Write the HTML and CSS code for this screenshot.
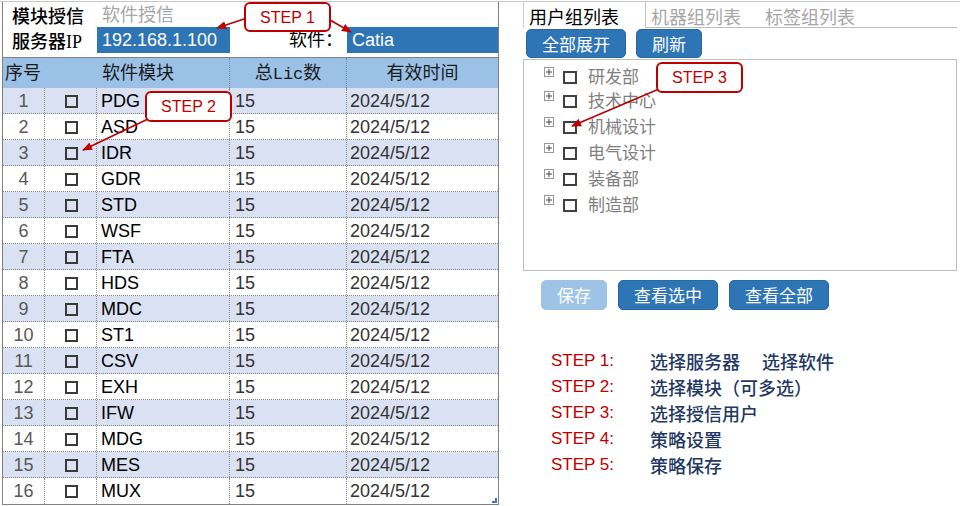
FILE: index.html
```html
<html>
  <head>
    <link rel="stylesheet" href="styles.css">
  </head>
  <body class="body">
    <div class="TopLine"></div>
    <div class="Page">

      <div class="Sheet">
        <div class="Info">
          <div class="Info-label">模块授信</div>
          <div class="Info-hint">软件授信</div>
          <div></div>
          <div></div>
          <div class="Info-label">服务器<span class="serif">IP</span></div>
          <div class="Info-value">192.168.1.100</div>
          <div class="Info-key">软件：</div>
          <div class="Info-value">Catia</div>
        </div>

        <div class="Head">
          <div class="Head-cell">序号</div>
          <div class="Head-cell Head-cell--left">软件模块</div>
          <div class="Head-cell Head-cell--mid">总<span class="mono">Lic</span>数</div>
          <div class="Head-cell Head-cell--mid">有效时间</div>
        </div>

        <div class="Rows" id="rows"></div>
        <div class="Sheet-handle"></div>
      </div>

      <div class="Side">
        <div class="Tabs">
          <div class="Tab Tab--active">用户组列表</div>
          <div class="Tab Tab--second">机器组列表</div>
          <div class="Tab">标签组列表</div>
        </div>
        <div class="Tools">
          <button class="Btn Btn--wide">全部展开</button>
          <button class="Btn">刷新</button>
        </div>
        <div class="Tree" id="tree"></div>
        <div class="Actions">
          <button class="Btn Btn--off">保存</button>
          <button class="Btn Btn--wide">查看选中</button>
          <button class="Btn Btn--wide">查看全部</button>
        </div>
        <div class="Steps">
          <div class="Step"><span class="Step-no">STEP 1:</span><span class="Step-text">选择服务器<span class="Step-gap">选择软件</span></span></div>
          <div class="Step"><span class="Step-no">STEP 2:</span><span class="Step-text">选择模块（可多选）</span></div>
          <div class="Step"><span class="Step-no">STEP 3:</span><span class="Step-text">选择授信用户</span></div>
          <div class="Step"><span class="Step-no">STEP 4:</span><span class="Step-text">策略设置</span></div>
          <div class="Step"><span class="Step-no">STEP 5:</span><span class="Step-text">策略保存</span></div>
        </div>
      </div>
    </div>

    <svg class="Notes" width="960" height="506" viewBox="0 0 960 506">
      <defs>
        <marker id="head" viewBox="0 0 10 8" refX="9" refY="4" markerWidth="10" markerHeight="8" markerUnits="userSpaceOnUse" orient="auto">
          <path d="M0 0 L10 4 L0 8 z" fill="#c00000"/>
        </marker>
      </defs>
      <g class="Notes-line">
        <line x1="247" y1="18" x2="217" y2="28" marker-end="url(#head)"/>
        <line x1="330" y1="20" x2="351" y2="32" marker-end="url(#head)"/>
        <line x1="148" y1="119" x2="83" y2="150" marker-end="url(#head)"/>
        <line x1="659" y1="89" x2="572" y2="126" marker-end="url(#head)"/>
      </g>
      <g class="Notes-box">
        <rect x="245" y="3" width="85" height="28" rx="5"/>
        <rect x="146" y="92" width="85" height="29" rx="5"/>
        <rect x="657" y="63" width="85" height="29" rx="5"/>
      </g>
      <g class="Notes-text">
        <text x="287.5" y="23">STEP 1</text>
        <text x="188.5" y="112">STEP 2</text>
        <text x="699.5" y="83">STEP 3</text>
      </g>
    </svg>

    <script>
      const modules = ['PDG', 'ASD', 'IDR', 'GDR', 'STD', 'WSF', 'FTA', 'HDS',
                       'MDC', 'ST1', 'CSV', 'EXH', 'IFW', 'MDG', 'MES', 'MUX'];
      const rows = document.getElementById('rows');
      modules.forEach((name, i) => {
        const row = document.createElement('div');
        row.className = 'Row' + (i % 2 === 0 ? ' Row--band' : '');
        row.innerHTML =
          '<div class="Cell Cell--num">' + (i + 1) + '</div>' +
          '<div class="Cell Cell--chk"><span class="Check"></span></div>' +
          '<div class="Cell Cell--name">' + name + '</div>' +
          '<div class="Cell Cell--lic">15</div>' +
          '<div class="Cell Cell--date">2024/5/12</div>';
        rows.appendChild(row);
      });

      const groups = ['研发部', '技术中心', '机械设计', '电气设计', '装备部', '制造部'];
      const tree = document.getElementById('tree');
      groups.forEach((name) => {
        const item = document.createElement('div');
        item.className = 'Tree-item';
        item.innerHTML =
          '<svg class="Tree-plus" width="10" height="10" viewBox="0 0 10 10">' +
          '<rect x="0.5" y="0.5" width="9" height="9" fill="none" stroke="#999"/>' +
          '<path d="M2 5 H8 M5 2 V8" stroke="#444"/></svg>' +
          '<span class="Tree-check"></span>' +
          '<span class="Tree-text">' + name + '</span>';
        tree.appendChild(item);
      });
    </script>
  </body>
</html>
```

FILE: styles.css
```css
html, body {
  padding: 0;
  margin: 0;
  background: #fff;
  font-family: "Liberation Sans", "Noto Sans CJK SC", sans-serif;
}
body {
  position: relative;
  width: 960px;
  height: 506px;
  overflow: hidden;
}
button {
  cursor: pointer;
}
.serif {
  font-family: "Liberation Serif", serif;
}
.mono {
  font-family: "Liberation Mono", monospace;
  font-size: 17px;
}

.TopLine {
  height: 1px;
  border-bottom: 1px solid #c8c8c8;
}
.Page {
  display: flex;
  align-items: flex-start;
}

/* left sheet */
.Sheet {
  position: relative;
  margin-left: 2px;
  width: 495px;
  border: 1px solid #808080;
  border-top: none;
}
.Info {
  display: grid;
  grid-template-columns: 94px 133px 117px 151px;
  grid-template-rows: 25px 26px;
  height: 55px;
  border-bottom: 1px solid #808080;
  font-size: 18px;
}
.Info-label {
  padding-left: 9px;
  line-height: 27px;
  color: #000;
  font-family: "Noto Sans CJK SC", sans-serif;
  font-weight: 500;
}
.Info-hint {
  padding-left: 5px;
  line-height: 27px;
  color: #a6a6a6;
}
.Info-value {
  padding-left: 5px;
  line-height: 26px;
  color: #fff;
  background: #2e75b6;
}
.Info-key {
  padding-right: 4px;
  line-height: 26px;
  text-align: right;
  color: #000;
}

.Head {
  display: grid;
  grid-template-columns: 94px 133px 117px 151px;
  height: 30px;
  background: #9bc2e6;
  font-size: 18px;
  line-height: 31px;
  color: #1a1a1a;
}
.Head-cell {
  padding-left: 2px;
}
.Head-cell--left {
  padding-left: 5px;
  border-right: 1px dotted #7a8a9a;
}
.Head-cell--mid {
  padding-left: 0;
  text-align: center;
}
.Head-cell--mid:nth-child(3) {
  border-right: 1px dotted #7a8a9a;
}

.Row {
  display: grid;
  grid-template-columns: 42px 52px 133px 117px 151px;
  height: 26px;
  box-sizing: border-box;
  border-bottom: 1px dotted #808080;
  font-size: 18px;
  line-height: 27px;
}
.Row:last-child {
  border-bottom: none;
}
.Row--band {
  background: #d9e1f2;
}
.Cell {
  border-right: 1px dotted #8c8c8c;
  white-space: nowrap;
  overflow: hidden;
}
.Cell--num {
  text-align: center;
  color: #595959;
}
.Cell--chk {
  display: flex;
  align-items: center;
  justify-content: center;
}
.Cell--name {
  padding-left: 4px;
  color: #000;
}
.Cell--lic {
  padding-left: 5px;
  color: #333;
}
.Cell--date {
  padding-left: 3px;
  color: #333;
  border-right: none;
}
.Check {
  width: 13px;
  height: 13px;
  box-sizing: border-box;
  border: 2px solid #3a3a3a;
  margin: 1px 0 0 1px;
}
.Sheet-handle {
  position: absolute;
  right: 1px;
  bottom: 1px;
  width: 5px;
  height: 5px;
  background: #4472c4;
  clip-path: polygon(60% 0, 100% 0, 100% 100%, 0 100%, 0 60%, 60% 60%);
}

/* right side */
.Side {
  margin-left: 24px;
  width: 434px;
}
.Tabs {
  display: flex;
  height: 26px;
  font-size: 18px;
  line-height: 28px;
  font-family: "Noto Sans CJK SC", sans-serif;
}
.Tab {
  flex: 1;
  box-sizing: border-box;
  padding-left: 5px;
  color: #a6a6a6;
  border-bottom: 1px solid #bfbfbf;
}
.Tab--active {
  flex: 0 0 122px;
  color: #000;
  border-bottom: none;
  border-left: 1px solid #d0d0d0;
}
.Tab--second {
  flex: 0 0 115px;
  border-left: 1px solid #bfbfbf;
}
.Tools {
  display: flex;
  gap: 10px;
  height: 31px;
  padding: 1px 0 0 3px;
  box-sizing: border-box;
}
.Btn {
  width: 66px;
  height: 29px;
  padding: 0;
  border: 1px solid #2a68a0;
  border-radius: 5px;
  background: #2e75b6;
  color: #fff;
  font-family: "Noto Sans CJK SC", sans-serif;
  font-size: 17px;
  line-height: 26px;
}
.Btn--wide {
  width: 100px;
}
.Btn--off {
  background: #9dc3e6;
  border-color: #9dc3e6;
}

.Tree {
  height: 212px;
  box-sizing: border-box;
  border: 1px solid #bfbfbf;
  padding: 5px 0 0 20px;
}
.Tree-item {
  display: flex;
  align-items: center;
  height: 26px;
}
.Tree-item:first-child {
  height: 22px;
}
.Tree-plus {
  margin-bottom: 8px;
}
.Tree-check {
  width: 14px;
  height: 13px;
  box-sizing: border-box;
  border: 2px solid #404040;
  margin-left: 9px;
  margin-top: 3px;
}
.Tree-text {
  margin-left: 11px;
  font-family: "Noto Sans CJK SC", sans-serif;
  font-size: 17px;
  color: #7f7f7f;
  line-height: 26px;
}

.Actions {
  display: flex;
  gap: 11px;
  margin-top: 9px;
  padding-left: 18px;
}
.Actions .Btn {
  height: 30px;
}

.Steps {
  margin-top: 38px;
  padding-left: 28px;
}
.Step {
  display: flex;
  height: 26px;
  line-height: 26px;
}
.Step-no {
  width: 99px;
  color: #c00000;
  font-size: 17px;
}
.Step-text {
  color: #1f3864;
  font-size: 18px;
  font-weight: 500;
  font-family: "Noto Sans CJK SC", sans-serif;
}
.Step-gap {
  margin-left: 22px;
}

/* callouts */
.Notes {
  position: absolute;
  top: 0;
  left: 0;
  pointer-events: none;
}
.Notes-line line {
  stroke: #c00000;
  stroke-width: 1.6;
}
.Notes-box rect {
  fill: #fff;
  stroke: #c00000;
  stroke-width: 2;
}
.Notes-text text {
  fill: #c00000;
  font-family: "Liberation Sans", sans-serif;
  font-size: 16px;
  text-anchor: middle;
}
```
